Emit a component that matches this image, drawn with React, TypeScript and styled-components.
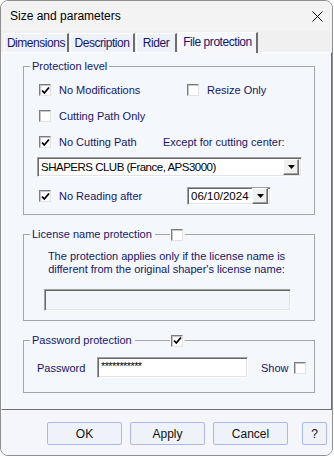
import React from "react";
import styled, { createGlobalStyle } from "styled-components";

const INK = "#16166a";

const GlobalStyle = createGlobalStyle`
  html, body {
    margin: 0;
    padding: 0;
    background: #ffffff;
  }
  body {
    font-family: "Liberation Sans", Arial, sans-serif;
  }
`;

const Window = styled.div`
  width: 333px;
  height: 456px;
  box-sizing: border-box;
  border: 1px solid #8f8f8f;
  border-radius: 8px;
  overflow: hidden;
  background: #f0f0f0;
  display: flex;
  flex-direction: column;
`;

const TitleBar = styled.div`
  height: 30px;
  flex: none;
  display: flex;
  align-items: center;
  justify-content: space-between;
  padding: 0 9px;
  background: #f3f3f3;
  font-size: 12px;
  color: #000;
`;

const TabStrip = styled.div`
  height: 21px;
  flex: none;
  display: flex;
  align-items: flex-end;
  padding-left: 3px;
  background: #f0f0f0;
`;

const Tab = styled.div<{ $w: number; $active?: boolean }>`
  width: ${(p) => p.$w}px;
  height: ${(p) => (p.$active ? 21 : 19)}px;
  box-sizing: border-box;
  margin-right: 1px;
  display: flex;
  align-items: center;
  justify-content: center;
  padding-bottom: ${(p) => (p.$active ? 3 : 1)}px;
  background: ${(p) => (p.$active ? "#f5f7fb" : "#eef1f8")};
  border-top: 1px solid #ffffff;
  border-left: 1px solid #ffffff;
  border-right: 2px solid #6e6e6e;
  font-size: 12px;
  letter-spacing: -0.45px;
  color: ${INK};
  white-space: nowrap;
  position: relative;
  z-index: ${(p) => (p.$active ? 1 : 0)};
  margin-bottom: ${(p) => (p.$active ? -1 : 0)}px;
`;

const Panel = styled.div`
  height: 358px;
  flex: none;
  box-sizing: border-box;
  background: #f4f7fb;
  border-top: 1px solid #ffffff;
  border-left: 1px solid #ffffff;
  border-right: 1px solid #6e6e6e;
  border-bottom: 1px solid #6e6e6e;
  display: flex;
  flex-direction: column;
  font-size: 11px;
  color: ${INK};
`;

const Group = styled.fieldset<{ $mt: number; $pad: string }>`
  margin: ${(p) => p.$mt}px 0 0 21px;
  width: 292px;
  min-width: 0;
  box-sizing: border-box;
  border: 1px solid #a6a6a6;
  padding: ${(p) => p.$pad};
`;

const Legend = styled.legend<{ $w?: number }>`
  margin-left: 6px;
  padding: 0 2px;
  height: 13px;
  line-height: 13px;
  width: ${(p) => (p.$w ? `${p.$w}px` : "auto")};
  box-sizing: border-box;
  display: flex;
  align-items: center;
  font-size: 11px;
  color: ${INK};
`;

const LegendRule = styled.span`
  flex: 1;
  height: 1px;
  margin: 0 1px 0 3px;
  background: #a6a6a6;
`;

const Row = styled.div<{ $h: number; $mt?: number; $pl: number }>`
  height: ${(p) => p.$h}px;
  margin-top: ${(p) => p.$mt ?? 0}px;
  padding-left: ${(p) => p.$pl}px;
  display: flex;
  align-items: center;
`;

const CheckItem = styled.label<{ $w?: number }>`
  width: ${(p) => (p.$w ? `${p.$w}px` : "auto")};
  flex: none;
  display: flex;
  align-items: center;
  gap: 8px;
  white-space: nowrap;
`;

const Box = styled.span`
  width: 12px;
  height: 12px;
  flex: none;
  box-sizing: border-box;
  background: #ffffff;
  border-top: 1px solid #7c7c7c;
  border-left: 1px solid #7c7c7c;
  border-right: 1px solid #e2e2e2;
  border-bottom: 1px solid #e2e2e2;
  box-shadow: inset 1px 1px 0 #c6c6c6;
  display: flex;
  align-items: center;
  justify-content: center;
`;

const Text = styled.span<{ $w?: number; $ml?: number }>`
  width: ${(p) => (p.$w ? `${p.$w}px` : "auto")};
  margin-left: ${(p) => p.$ml ?? 0}px;
  flex: none;
  white-space: nowrap;
`;

const Sunken = styled.div<{ $w: number; $h: number; $bg?: string }>`
  width: ${(p) => p.$w}px;
  height: ${(p) => p.$h}px;
  flex: none;
  box-sizing: border-box;
  background: ${(p) => p.$bg ?? "#ffffff"};
  border-top: 1px solid #a0a0a0;
  border-left: 1px solid #a0a0a0;
  border-right: 1px solid #ffffff;
  border-bottom: 1px solid #ffffff;
  box-shadow: inset 1px 1px 0 #696969, inset -1px -1px 0 #e3e3e3;
  display: flex;
  align-items: center;
  padding: 0 2px 0 3px;
  color: #000;
  font-size: 11.5px;
`;

const Value = styled.span<{ $tight?: boolean }>`
  flex: 1;
  white-space: nowrap;
  overflow: hidden;
  letter-spacing: ${(p) => (p.$tight ? "-0.5px" : "0")};
`;

const Mask = styled.span`
  align-self: flex-start;
  margin-top: 3px;
  font-size: 11px;
  letter-spacing: -0.6px;
  line-height: 10px;
`;

const DropButton = styled.span`
  width: 16px;
  height: 16px;
  flex: none;
  box-sizing: border-box;
  background: #f0f0f0;
  border-top: 1px solid #ffffff;
  border-left: 1px solid #ffffff;
  border-right: 1px solid #696969;
  border-bottom: 1px solid #696969;
  box-shadow: inset -1px -1px 0 #a0a0a0;
  display: flex;
  align-items: center;
  justify-content: center;
`;

const Note = styled.div`
  padding: 9px 5px 0 0;
  line-height: 13px;
  text-align: center;
`;

const Footer = styled.div`
  flex: 1;
  background: #f4f6fb;
  display: flex;
  align-items: flex-start;
  padding: 12px 0 0 46px;
`;

const Button = styled.div<{ $w: number; $ml: number }>`
  width: ${(p) => p.$w}px;
  height: 23px;
  margin-left: ${(p) => p.$ml}px;
  box-sizing: border-box;
  border: 1px solid #aab8ee;
  border-radius: 2px;
  background: #eff2f9;
  display: flex;
  align-items: center;
  justify-content: center;
  font-size: 12px;
  color: #111;
`;

const Check = () => (
  <svg width="9" height="9" viewBox="0 0 9 9">
    <polyline points="1,4.5 3.3,7 8,1.5" fill="none" stroke="#000" strokeWidth="1.8" />
  </svg>
);

const CheckBox: React.FC<{ checked?: boolean }> = ({ checked }) => (
  <Box>{checked ? <Check /> : null}</Box>
);

const Arrow = () => (
  <svg width="7" height="4" viewBox="0 0 7 4">
    <polygon points="0,0 7,0 3.5,4" fill="#000" />
  </svg>
);

const CloseIcon = () => (
  <svg width="11" height="11" viewBox="0 0 11 11">
    <path d="M0.5 0.5 L10.5 10.5 M10.5 0.5 L0.5 10.5" stroke="#000" strokeWidth="1" />
  </svg>
);

export default function App() {
  return (
    <>
      <GlobalStyle />
      <Window>
        <TitleBar>
          <span>Size and parameters</span>
          <CloseIcon />
        </TitleBar>

        <TabStrip>
          <Tab $w={65}>Dimensions</Tab>
          <Tab $w={65}>Description</Tab>
          <Tab $w={41}>Rider</Tab>
          <Tab $w={80} $active>
            File protection
          </Tab>
        </TabStrip>

        <Panel>
          <Group $mt={7} $pad="4px 0 9px 0">
            <Legend>Protection level</Legend>
            <Row $h={26} $pl={15}>
              <CheckItem $w={148}>
                <CheckBox checked />
                No Modifications
              </CheckItem>
              <CheckItem>
                <CheckBox />
                Resize Only
              </CheckItem>
            </Row>
            <Row $h={26} $pl={15}>
              <CheckItem>
                <CheckBox />
                Cutting Path Only
              </CheckItem>
            </Row>
            <Row $h={26} $pl={15}>
              <CheckItem $w={124}>
                <CheckBox checked />
                No Cutting Path
              </CheckItem>
              <Text>Except for cutting center:</Text>
            </Row>
            <Row $h={20} $mt={2} $pl={13}>
              <Sunken $w={265} $h={20}>
                <Value $tight>SHAPERS CLUB (France, APS3000)</Value>
                <DropButton>
                  <Arrow />
                </DropButton>
              </Sunken>
            </Row>
            <Row $h={18} $mt={10} $pl={15}>
              <CheckItem $w={148}>
                <CheckBox checked />
                No Reading after
              </CheckItem>
              <Sunken $w={84} $h={18}>
                <Value>06/10/2024</Value>
                <DropButton>
                  <Arrow />
                </DropButton>
              </Sunken>
            </Row>
          </Group>

          <Group $mt={13} $pad="0 0 9px 0">
            <Legend $w={155}>
              License name protection
              <LegendRule />
              <CheckBox />
            </Legend>
            <Note>
              The protection applies only if the license name is
              <br />
              different from the original shaper's license name:
            </Note>
            <Row $h={22} $mt={13} $pl={20}>
              <Sunken $w={247} $h={22} $bg="#f2f5fa" />
            </Row>
          </Group>

          <Group $mt={13} $pad="10px 0 14px 0">
            <Legend $w={155}>
              Password protection
              <LegendRule />
              <CheckBox checked />
            </Legend>
            <Row $h={21} $pl={13}>
              <Text $w={60}>Password</Text>
              <Sunken $w={151} $h={21}>
                <Mask>***********</Mask>
              </Sunken>
              <Text $w={33} $ml={13}>
                Show
              </Text>
              <CheckBox />
            </Row>
          </Group>
        </Panel>

        <Footer>
          <Button $w={75} $ml={0}>OK</Button>
          <Button $w={75} $ml={8}>Apply</Button>
          <Button $w={75} $ml={8}>Cancel</Button>
          <Button $w={25} $ml={14}>?</Button>
        </Footer>
      </Window>
    </>
  );
}
